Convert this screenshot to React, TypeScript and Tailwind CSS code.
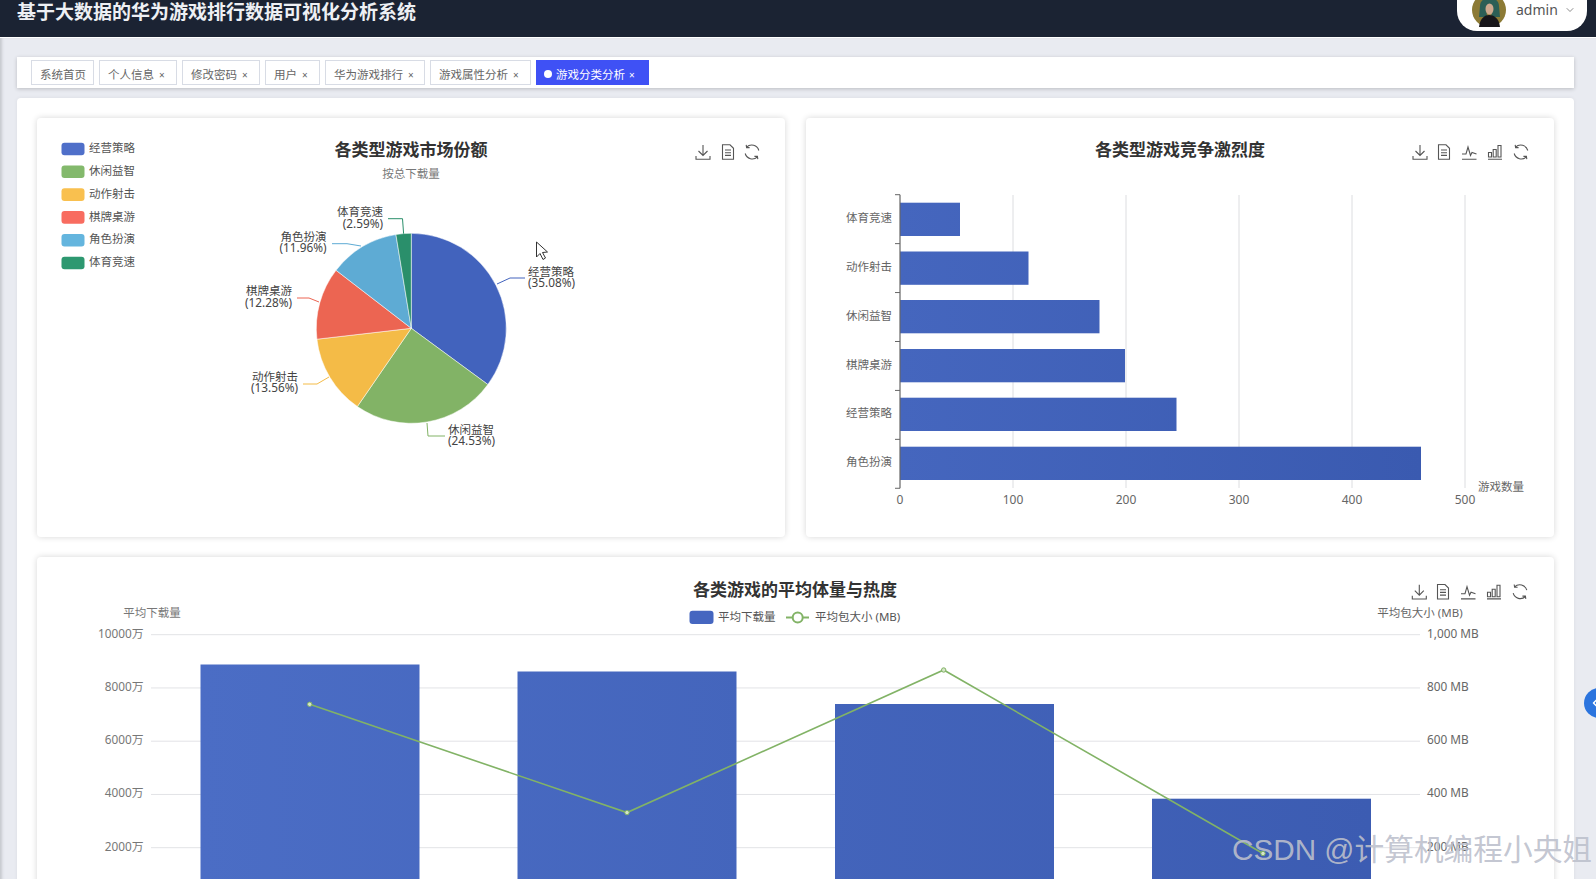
import { ChevronDown, ChevronLeft } from 'lucide-react';

const tabs = [
  { label: '系统首页', width: 'w-[63px]', close: false },
  { label: '个人信息', width: 'w-[78px]', close: true },
  { label: '修改密码', width: 'w-[78px]', close: true },
  { label: '用户', width: 'w-[55px]', close: true },
  { label: '华为游戏排行', width: 'w-[100px]', close: true },
  { label: '游戏属性分析', width: 'w-[101px]', close: true },
];

const pie = [
  { name: '经营策略', value: 35.08, color: '#4263bd', legend: '#4f6fc9' },
  { name: '休闲益智', value: 24.53, color: '#82b366', legend: '#83b96c' },
  { name: '动作射击', value: 13.56, color: '#f4bb47', legend: '#f9c04f' },
  { name: '棋牌桌游', value: 12.28, color: '#ec6552', legend: '#f86c60' },
  { name: '角色扮演', value: 11.96, color: '#5eabd4', legend: '#64b5de' },
  { name: '体育竞速', value: 2.59, color: '#2a8f6b', legend: '#2d9870' },
];

const pieLabels = [
  { i: 0, x: 528, y: 271.5, anchor: 'start', line: '497,284 510,278 525,278' },
  { i: 1, x: 448, y: 429.5, anchor: 'start', line: '427,423 428,436 445,436' },
  { i: 2, x: 298, y: 376.5, anchor: 'end', line: '329,377 317,384 303,384' },
  { i: 3, x: 292, y: 291, anchor: 'end', line: '319,302 309,298 297,298' },
  { i: 4, x: 326.5, y: 236.5, anchor: 'end', line: '361,246 347,243.7 332,243.7' },
  { i: 5, x: 383, y: 212, anchor: 'end', line: '403.6,233.7 402.5,218.7 388,218.7' },
];

const hbars = [
  { name: '体育竞速', end: 960, top: 202.7 },
  { name: '动作射击', end: 1028.5, top: 251.5 },
  { name: '休闲益智', end: 1099.5, top: 300 },
  { name: '棋牌桌游', end: 1125, top: 349 },
  { name: '经营策略', end: 1176.5, top: 397.7 },
  { name: '角色扮演', end: 1421, top: 446.7 },
];

const vbars = [
  { x: 200.5, w: 219, top: 664.5 },
  { x: 517.5, w: 219, top: 671.5 },
  { x: 835, w: 219, top: 704 },
  { x: 1152, w: 219, top: 798.7 },
];

const linePts = [
  [309.7, 704.3],
  [627, 812.6],
  [943.7, 670],
  [1263, 853.5],
];

function polar(cx: number, cy: number, r: number, pct: number) {
  const a = (pct / 100) * Math.PI * 2;
  return [cx + r * Math.sin(a), cy - r * Math.cos(a)];
}

function slicePath(from: number, to: number) {
  const [x1, y1] = polar(411.3, 328.3, 95, from);
  const [x2, y2] = polar(411.3, 328.3, 95, to);
  const large = to - from > 50 ? 1 : 0;
  return `M411.3 328.3L${x1} ${y1}A95 95 0 ${large} 1 ${x2} ${y2}Z`;
}

function ToolIcon({ kind, x, y }: { kind: string; x: number; y: number }) {
  return (
    <g transform={`translate(${x - 8} ${y - 8})`} fill="none" stroke="#555" strokeWidth={1.1}>
      {kind === 'download' && <path d="M8 1V11.5M3.5 7L8 11.5L12.5 7M1 12V15.3H15V12" />}
      {kind === 'doc' && <path d="M2.5 0.8H10L13.5 4.3V15.3H2.5ZM5 6H11M5 8.7H11M5 11.4H11" />}
      {kind === 'line' && <path d="M1 15.2H15.5M1 10H5L7 3L9.5 11.5L11 8.5L15.5 10" />}
      {kind === 'bar' && <path d="M1 15.2H15M1.5 8.5H4.5V13H1.5ZM6.2 5.5H9.2V13H6.2ZM11 1.5H14V13H11Z" />}
      {kind === 'refresh' && (
        <path d="M14.8 6.5A7.3 7.3 0 0 0 2.6 3.2M1.2 9.5A7.3 7.3 0 0 0 13.4 12.8M2.2 0.8L2.6 3.6L5.6 3.6M13.8 15.2L13.4 12.4L10.4 12.4" />
      )}
    </g>
  );
}

function Tools({ items, y }: { items: [string, number][]; y: number }) {
  return (
    <>
      {items.map(([kind, x]) => (
        <ToolIcon key={kind} kind={kind} x={x} y={y} />
      ))}
    </>
  );
}

function PieChart() {
  let acc = 0;
  const slices = pie.map((p) => {
    const d = slicePath(acc, acc + p.value);
    acc += p.value;
    return { ...p, d };
  });
  return (
    <svg viewBox="37 118 748 419" className="block w-full h-full">
      {pie.map((p, i) => (
        <g key={p.name}>
          <rect x={61.5} y={142.7 + i * 22.8} width={23} height={12.6} rx={3} fill={p.legend} />
          <text x={89} y={152.2 + i * 22.8} fontSize={11.5} fill="#555">{p.name}</text>
        </g>
      ))}
      <text x={411} y={156} fontSize={17} fontWeight={700} fill="#333" textAnchor="middle">各类型游戏市场份额</text>
      <text x={411} y={178} fontSize={11.5} fill="#777" textAnchor="middle">按总下载量</text>
      {slices.map((s) => (
        <path key={s.name} d={s.d} fill={s.color} stroke="#fff" strokeWidth={0.5} />
      ))}
      {pieLabels.map((l) => (
        <g key={l.i}>
          <polyline points={l.line} fill="none" stroke={pie[l.i].color} strokeWidth={1} />
          <text x={l.x} y={l.y + 4} fontSize={11.5} fill="#444" textAnchor={l.anchor as 'start' | 'end'}>{pie[l.i].name}</text>
          <text x={l.x} y={l.y + 15.5} fontSize={11.8} fill="#444" textAnchor={l.anchor as 'start' | 'end'}>({pie[l.i].value.toFixed(2)}%)</text>
        </g>
      ))}
      <path d="M536.5 242V257L540 253.5L543 259.5L545.5 258L542.5 252.5L547.5 252Z" fill="#fff" stroke="#333" strokeWidth={1} />
      <Tools y={152} items={[['download', 703], ['doc', 728], ['refresh', 752]]} />
    </svg>
  );
}

function RankChart() {
  const ticks = [0, 100, 200, 300, 400, 500];
  return (
    <svg viewBox="806 118 748 419" className="block w-full h-full">
      <defs>
        <linearGradient id="hbar" gradientUnits="userSpaceOnUse" x1="900" y1="0" x2="1421" y2="0">
          <stop offset="0" stopColor="#4566be" />
          <stop offset="1" stopColor="#3a5ab0" />
        </linearGradient>
      </defs>
      <text x={1180} y={156} fontSize={17} fontWeight={700} fill="#333" textAnchor="middle">各类型游戏竞争激烈度</text>
      {ticks.slice(1).map((t, i) => (
        <line key={t} x1={1013 + i * 113} x2={1013 + i * 113} y1={195} y2={488} stroke="#dcdde0" strokeWidth={1} />
      ))}
      {hbars.map((b) => (
        <g key={b.name}>
          <rect x={900} y={b.top} width={b.end - 900} height={33.3} fill="url(#hbar)" />
          <text x={892} y={b.top + 19.5} fontSize={11.5} fill="#666" textAnchor="end">{b.name}</text>
        </g>
      ))}
      <path d="M900 194.7V488.3" stroke="#666" strokeWidth={1.2} />
      {[0, 1, 2, 3, 4, 5, 6].map((i) => (
        <line key={i} x1={895} x2={900} y1={194.7 + i * 48.93} y2={194.7 + i * 48.93} stroke="#666" strokeWidth={1} />
      ))}
      {ticks.map((t, i) => (
        <text key={t} x={900 + i * 113} y={504} fontSize={12} fill="#666" textAnchor="middle">{t}</text>
      ))}
      <text x={1478} y={491} fontSize={11.5} fill="#666">游戏数量</text>
      <Tools y={152} items={[['download', 1420], ['doc', 1444], ['line', 1469], ['bar', 1495], ['refresh', 1521]]} />
    </svg>
  );
}

function ComboChart() {
  const left = ['10000万', '8000万', '6000万', '4000万', '2000万'];
  const right = ['1,000 MB', '800 MB', '600 MB', '400 MB', '200 MB'];
  return (
    <svg viewBox="37 557 1517 322" className="block w-full h-[322px]">
      <defs>
        <linearGradient id="vbar" gradientUnits="userSpaceOnUse" x1="200" y1="0" x2="1371" y2="0">
          <stop offset="0" stopColor="#4b6dc5" />
          <stop offset="1" stopColor="#3c5cb2" />
        </linearGradient>
      </defs>
      <text x={795} y={596} fontSize={17} fontWeight={700} fill="#333" textAnchor="middle">各类游戏的平均体量与热度</text>
      <rect x={689.5} y={610.7} width={24} height={13.3} rx={3} fill="#4566c0" />
      <text x={718} y={620.5} fontSize={11.5} fill="#555">平均下载量</text>
      <path d="M786 617.5H809" stroke="#82b366" strokeWidth={2} />
      <circle cx={797.7} cy={617.5} r={5} fill="#fff" stroke="#82b366" strokeWidth={2} />
      <text x={815} y={620.5} fontSize={11.5} fill="#555">平均包大小 (MB)</text>
      <text x={152} y={617} fontSize={11.5} fill="#777" textAnchor="middle">平均下载量</text>
      <text x={1420} y={617} fontSize={11.5} fill="#666" textAnchor="middle">平均包大小 (MB)</text>
      {left.map((t, i) => (
        <g key={t}>
          <line x1={151} x2={1420} y1={634.7 + i * 53.25} y2={634.7 + i * 53.25} stroke="#e2e3e6" strokeWidth={1} />
          <text x={143.5} y={637.5 + i * 53.25} fontSize={11.8} fill="#777" textAnchor="end">{t}</text>
          <text x={1427} y={637.5 + i * 53.25} fontSize={11.8} fill="#666">{right[i]}</text>
        </g>
      ))}
      {vbars.map((b) => (
        <rect key={b.x} x={b.x} y={b.top} width={b.w} height={879 - b.top} fill="url(#vbar)" />
      ))}
      <polyline points={linePts.map((p) => p.join(',')).join(' ')} fill="none" stroke="#82b366" strokeWidth={1.6} />
      {linePts.map((p) => (
        <circle key={p[0]} cx={p[0]} cy={p[1]} r={2.2} fill="#d5e6c8" stroke="#82b366" strokeWidth={1} />
      ))}
      <Tools y={591.7} items={[['download', 1419.3], ['doc', 1443], ['line', 1468], ['bar', 1494], ['refresh', 1520]]} />
    </svg>
  );
}

function Avatar() {
  return (
    <svg viewBox="0 0 34 34" className="w-[34px] h-[34px] shrink-0 -mt-[11px]">
      <circle cx="17" cy="17" r="17" fill="#8c7a35" />
      <path d="M8 13C8 2 27 2 27 13L28 24H19L21 13H14L15 24H7Z" fill="#2c5f56" />
      <ellipse cx="17.5" cy="16" rx="4" ry="5.5" fill="#cfa98f" />
      <path d="M7 34C8 25 13 22 17 22C22 22 27 25 28 34Z" fill="#17161a" />
    </svg>
  );
}

export default function App() {
  return (
    <div className="relative w-[1596px] h-[879px] overflow-hidden bg-[#e9ebf1] font-['Noto_Sans','Noto_Sans_CJK_SC',sans-serif]">
      <header className="h-[38px] bg-[#1b2333] border-b border-white pl-[17px] pr-[9px] flex items-start justify-between">
        <h1 className="text-[19px] leading-[24px] font-bold text-[#eef0f4] whitespace-nowrap">基于大数据的华为游戏排行数据可视化分析系统</h1>
        <div className="w-[130px] h-[31px] bg-white rounded-b-[20px] pl-[15px] flex items-center overflow-hidden">
          <Avatar />
          <span className="ml-[10px] -mt-[11px] text-[14px] leading-5 text-[#555]">admin</span>
          <ChevronDown className="ml-[6px] -mt-[11px] w-[12px] h-[12px] text-[#666]" strokeWidth={1.5} />
        </div>
      </header>

      <main className="pl-[17px] pr-[22px] pt-[19px] shadow-[inset_3px_0_3px_-1px_#c6c8ce]">
        <nav className="h-[31px] bg-white shadow-[0_1px_4px_rgba(0,0,0,0.2)] pl-[14px] flex items-center gap-[5px]">
          {tabs.map((t) => (
            <div key={t.label} className={`${t.width} h-[25px] pt-[4px] pl-[8px] border border-[#d8dce5] text-[11.5px] text-[#666] flex items-center gap-[5px] whitespace-nowrap`}>
              <span>{t.label}</span>
              {t.close && <span className="text-[10px] leading-none">×</span>}
            </div>
          ))}
          <div className="w-[113px] h-[25px] pt-[4px] pl-[8px] bg-[#3f51f5] text-[11.5px] text-white flex items-center gap-[4px] whitespace-nowrap">
            <span className="w-[8px] h-[8px] rounded-full bg-white -mt-[1px]" />
            <span>游戏分类分析</span>
            <span className="text-[10px] leading-none">×</span>
          </div>
        </nav>

        <section className="mt-[10px] bg-white rounded-t p-[20px] shadow-[0_0_4px_rgba(0,0,0,0.06)]">
          <div className="grid grid-cols-2 gap-[21px]">
            <div className="h-[419px] bg-white rounded shadow-[0_0_6px_rgba(0,0,0,0.16)]">
              <PieChart />
            </div>
            <div className="h-[419px] bg-white rounded shadow-[0_0_6px_rgba(0,0,0,0.16)]">
              <RankChart />
            </div>
          </div>
          <div className="mt-[20px] h-[400px] bg-white rounded shadow-[0_0_6px_rgba(0,0,0,0.16)]">
            <ComboChart />
          </div>
        </section>
      </main>

      <button className="absolute left-[1584px] top-[688px] w-[30px] h-[30px] rounded-full bg-[#2b74de] flex items-center pl-[5px] text-white">
        <ChevronLeft className="w-[12px] h-[12px]" strokeWidth={3} />
      </button>
      <div className="absolute left-[1232px] top-[828px] text-[29.7px] leading-[44px] whitespace-nowrap text-[#bcc0cc]/90 font-['Liberation_Sans','Noto_Sans_CJK_SC',sans-serif]">
        CSDN @计算机编程小央姐
      </div>
    </div>
  );
}
